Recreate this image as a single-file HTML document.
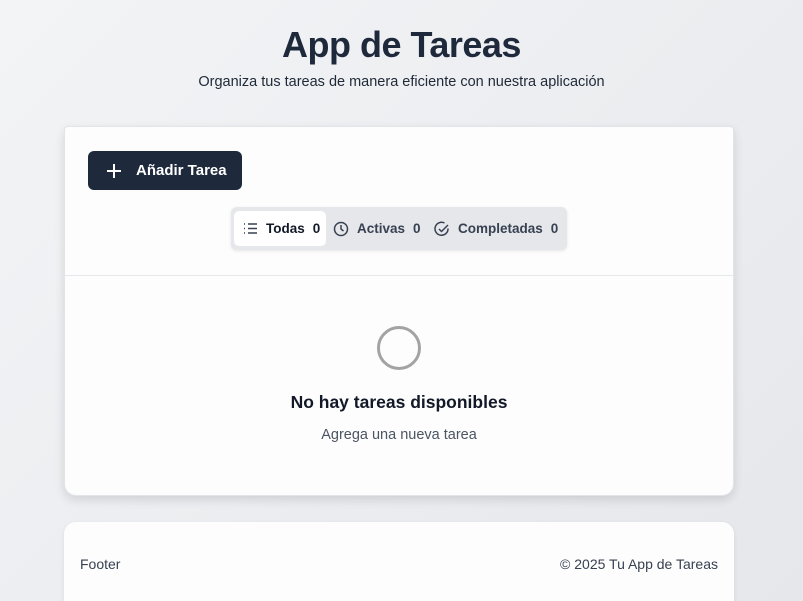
<!DOCTYPE html>
<html><head><meta charset="utf-8"><style>
*{box-sizing:border-box;margin:0;padding:0}
html{width:803px;height:601px;overflow:hidden;background:#eceef1}
body{width:803px;height:601px;overflow:hidden;font-family:"Liberation Sans",sans-serif;background:linear-gradient(135deg,#f3f4f6,#e5e7eb);color:#1f2937;position:relative}
h1{position:absolute;top:24px;left:0;width:803px;text-align:center;font-size:36px;font-weight:bold;color:#1e293b;letter-spacing:-0.5px}
.sub{position:absolute;top:74px;left:0;width:803px;text-align:center;font-size:14.5px;color:#1f2937}
.card{position:absolute;left:64px;top:126px;width:670px;height:370px;background:#fdfdfd;border:1px solid #e2e4e8;border-radius:4px 4px 12px 12px;box-shadow:0 4px 10px rgba(0,0,0,.12)}
.btn{position:absolute;left:23px;top:24px;width:154px;height:39px;background:#1e293b;border-radius:6px;color:#fff;font-size:15px;font-weight:bold;display:flex;align-items:center;padding-left:18px}
.btn svg{margin-right:14px}
.tabs{position:absolute;left:166px;top:80px;width:336px;height:43px;background:#e5e7eb;border-radius:6px;box-shadow:0 1px 3px rgba(0,0,0,.1)}
.tab{position:absolute;top:4px;height:35px;display:flex;align-items:center;font-size:13.5px;font-weight:bold;color:#374151}
.tab svg{margin-right:8px}
.tab b{margin-left:8px}
.active{left:3px;width:92px;background:#fff;border-radius:5px;padding-left:9px;color:#111827}
.div{position:absolute;left:0;top:148px;width:668px;height:1px;background:#e5e7eb}
.circ{position:absolute;left:312px;top:199px;width:44px;height:44px;border:3px solid #a3a3a3;border-radius:50%}
.t1{position:absolute;top:265px;width:668px;text-align:center;font-size:17.5px;font-weight:bold;color:#111827}
.t2{position:absolute;top:300px;width:668px;text-align:center;font-size:14.5px;color:#4b5563}
.foot{position:absolute;left:64px;top:522px;width:670px;height:79px;background:#fdfdfd;border-radius:12px 12px 0 0;box-shadow:0 2px 6px rgba(0,0,0,.08);font-size:14px;color:#374151}
.foot span{position:absolute;top:34px}
</style></head><body>
<h1>App de Tareas</h1>
<div class="sub">Organiza tus tareas de manera eficiente con nuestra aplicación</div>
<div class="card">
 <div class="btn"><svg width="16" height="16" viewBox="0 0 16 16"><path d="M8 1v14M1 8h14" stroke="#fff" stroke-width="2"/></svg>Añadir Tarea</div>
 <div class="tabs">
  <div class="tab active"><svg width="15" height="15" viewBox="0 0 15 15" fill="none" stroke="#374151" stroke-width="1.4"><path d="M5 3h9M5 7.5h9M5 12h9M1 3h1M1 7.5h1M1 12h1"/></svg>Todas<b>0</b></div>
  <div class="tab" style="left:102px"><svg width="16" height="16" viewBox="0 0 16 16" fill="none" stroke="#374151" stroke-width="1.5"><circle cx="8" cy="8" r="6.5"/><path d="M8 4v4l2.5 2"/></svg>Activas<b>0</b></div>
  <div class="tab" style="left:203px"><svg width="16" height="16" viewBox="0 0 16 16" fill="none" stroke="#374151" stroke-width="1.5"><path d="M14 7.5A6.5 6.5 0 1 1 10.5 2"/><path d="M5 8l2.5 2.5L14 4"/></svg>Completadas<b>0</b></div>
 </div>
 <div class="div"></div>
 <div class="circ"></div>
 <div class="t1">No hay tareas disponibles</div>
 <div class="t2">Agrega una nueva tarea</div>
</div>
<div class="foot"><span style="left:16px">Footer</span><span style="right:16px">© 2025 Tu App de Tareas</span></div>
</body></html>
